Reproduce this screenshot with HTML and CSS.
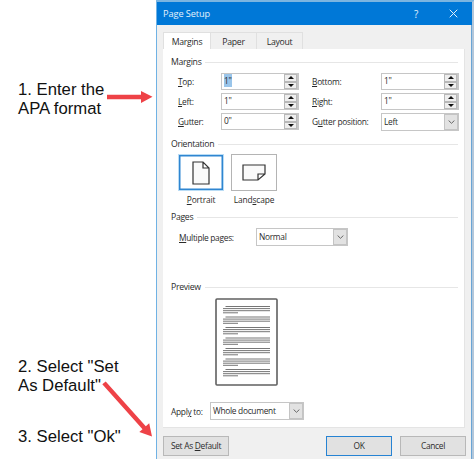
FILE: index.html
```html
<!DOCTYPE html>
<html lang="en">
<head>
<meta charset="utf-8">
<title>Page Setup</title>
<link rel="stylesheet" href="styles.css">
</head>
<body>
<aside class="notes">
  <p class="note note-1">1. Enter the<br>APA format</p>
  <p class="note note-2">2. Select "Set<br>As Default"</p>
  <p class="note note-3">3. Select "Ok"</p>
</aside>
<main class="dialog">
  <header class="titlebar">
    <span class="title">Page Setup</span>
    <span class="help">?</span>
    <svg class="close" viewBox="0 0 9 9"><path d="M.7.7 8.3 8.3M8.3.7.7 8.3"/></svg>
  </header>
  <div class="body">
    <nav class="tabs"><span class="tab active">Margins</span><span class="tab">Paper</span><span class="tab">Layout</span></nav>
    <div class="panel">
      <section class="margins">
        <h2><span>Margins</span></h2>
        <div class="fields">
          <label><u>T</u>op:</label><div class="spin"><span><mark>1"</mark></span><i></i><i class="down"></i></div>
          <label><u>B</u>ottom:</label><div class="spin"><span>1"</span><i></i><i class="down"></i></div>
          <label><u>L</u>eft:</label><div class="spin"><span>1"</span><i></i><i class="down"></i></div>
          <label><u>R</u>ight:</label><div class="spin"><span>1"</span><i></i><i class="down"></i></div>
          <label><u>G</u>utter:</label><div class="spin"><span>0"</span><i></i><i class="down"></i></div>
          <label>G<u>u</u>tter position:</label><div class="select"><span>Left</span><b><svg viewBox="0 0 7 4"><path d="M.6.5 3.5 3.3 6.4.5"/></svg></b></div>
        </div>
      </section>
      <section class="orientation">
        <h2><span>Orientation</span></h2>
        <div class="choices">
          <div class="choice chosen"><div class="tile"><svg width="18" height="24" viewBox="0 0 18 24"><path d="M1 1h10l6 6v16H1zM11 1v6h6"/></svg></div><span><u>P</u>ortrait</span></div>
          <div class="choice"><div class="tile"><svg width="24" height="18" viewBox="0 0 24 18"><path d="M1 1h22v9l-7 6H1zM23 10h-7v6"/></svg></div><span>Land<u>s</u>cape</span></div>
        </div>
      </section>
      <section class="pages">
        <h2><span>Pages</span></h2>
        <div class="row"><label><u>M</u>ultiple pages:</label><div class="select"><span>Normal</span><b><svg viewBox="0 0 7 4"><path d="M.6.5 3.5 3.3 6.4.5"/></svg></b></div></div>
      </section>
      <section class="preview">
        <h2><span>Preview</span></h2>
        <svg class="sheet" width="63" height="88" viewBox="0 0 63 88">
          <defs>
            <path id="para" d="M10.500 .5H55M8 2.600H55M8 4.700H55M8 6.800H23"/>
          </defs>
          <rect x="1" y="1" width="61" height="86" rx="1"/>
          <use href="#para" y="8"/><use href="#para" y="18.500"/><use href="#para" y="29"/><use href="#para" y="39.500"/><use href="#para" y="50"/><use href="#para" y="60.500"/><use href="#para" y="71"/>
        </svg>
        <div class="row"><label>Appl<u>y</u> to:</label><div class="select"><span>Whole document</span><b><svg viewBox="0 0 7 4"><path d="M.6.5 3.5 3.3 6.4.5"/></svg></b></div></div>
      </section>
    </div>
    <footer><span class="button">Set As <u>D</u>efault</span><span class="button ok">OK</span><span class="button">Cancel</span></footer>
  </div>
</main>
<svg class="arrows" width="474" height="459" viewBox="0 0 474 459">
  <path d="M107 94.800H141V91L152.500 96.700 141 103V99.200H107zM105.700 381.400 145.800 426.200 149.200 423.300 152 436.500 139.300 432 142.500 429.200 102.300 384.300z"/>
</svg>
</body>
</html>
```
FILE: styles.css
```css
* { box-sizing: border-box; }
body {
  margin: 0;
  width: 474px;
  height: 459px;
  overflow: hidden;
  display: flex;
  background: #fff;
  color: #2b2b2b;
  font: 8.400px/12px "Open Sans", "Noto Sans", sans-serif;
  letter-spacing: -.3px;
}
p, h2 { margin: 0; font: inherit; }
u { text-underline-offset: 1px; text-decoration-thickness: 1px; }

.notes {
  width: 156px;
  flex: none;
  padding: 80px 0 0 18px;
  color: #111;
  font: 16.700px/19px "Liberation Sans", Arial, sans-serif;
  letter-spacing: 0;
  white-space: nowrap;
}
.note-2 { margin-top: 239px; }
.note-3 { margin-top: 32px; }

.dialog {
  flex: 1;
  display: flex;
  flex-direction: column;
  border-top: 2px solid #7cb5e0;
  border-left: 1px solid #70b2e4;
  border-right: 3px solid #b3c7da;
}
.titlebar {
  height: 23px;
  flex: none;
  display: flex;
  align-items: center;
  padding: 0 14px 0 6px;
  background: #0078d7;
  color: #e4f1fb;
  font-size: 9.200px;
  letter-spacing: -.08px;
}
.title { flex: 1; }
.help { width: 35px; font-size: 10px; }
.close { width: 9px; height: 9px; fill: none; stroke: #e4f1fb; stroke-width: 1; }

.body {
  flex: 1;
  padding: 7px 5px 0 6px;
  background: #f0f0f0;
  border-right: 1px solid #6aa5d6;
}
.tabs { display: flex; height: 17px; }
.tab {
  width: 46px;
  padding-top: 3px;
  text-align: center;
  border: 1px solid #e0e0e0;
  border-width: 1px 1px 0 0;
  font-size: 8.700px;
}
.tab.active { width: 48px; background: #fff; border-left-width: 1px; }
.panel {
  width: 302px;
  height: 379px;
  padding: 7px 6px 0 8px;
  background: #fff;
  border-right: 1px solid #e4e4e4;
  border-bottom: 1px solid #e4e4e4;
}
h2 { display: flex; align-items: center; gap: 4px; height: 12px; font-size: 8.700px; }
h2::after { content: ""; flex: 1; height: 1px; background: #e6e6e6; }

.margins { height: 82px; }
.fields {
  display: grid;
  grid-template-columns: 43px 78px 82px 78px;
  grid-auto-rows: 18px;
  row-gap: 2px;
  padding: 5px 0 0 7px;
}
.fields label { padding-top: 3px; white-space: nowrap; }
.fields label:nth-of-type(even) { padding-left: 13px; }
.spin {
  display: grid;
  grid-template-columns: 1fr 13px;
  grid-template-rows: 7.500px 7.500px;
  height: 17px;
  border: 1px solid #c6c6c6;
  border-right-width: 2px;
}
.spin span { grid-row: 1 / 3; padding: 1px 0 0 2px; }
.spin mark { background: #9ac5ea; color: inherit; padding: 1px 0; }
.spin i { position: relative; grid-column: 2; background: #eee; border: 1px solid #b8b8b8; }
.spin i::after {
  content: "";
  position: absolute;
  left: 3px;
  top: 1px;
  border: 3px solid transparent;
  border-top: 0;
  border-bottom: 3px solid #111;
}
.spin i.down::after { border-bottom: 0; border-top: 3px solid #111; }
.select { display: flex; height: 18px; border: 1px solid #c6c6c6; white-space: nowrap; }
.select span { flex: 1; padding: 2px 0 0 2px; }
.select b { width: 14px; display: flex; align-items: center; justify-content: center; background: #e2e2e2; border: 1px solid #c4c4c4; }
.select svg { width: 7px; height: 4px; fill: none; stroke: #666; stroke-width: 1; }

.orientation { height: 73px; }
.choices { display: flex; gap: 7px; padding: 4px 0 0 7px; }
.choice { width: 46px; text-align: center; white-space: nowrap; letter-spacing: -.15px; }
.tile { height: 37px; margin-bottom: 3px; display: flex; align-items: center; justify-content: center; border: 1px solid #b4b4b4; }
.tile svg { fill: #fafafa; stroke: #333; stroke-width: 1.200; }
.chosen .tile { border: 1px solid #b9dcf5; box-shadow: inset 0 0 0 1.500px #2f86d1; }
.row { display: flex; }
.row label { padding-top: 4px; }
.pages { height: 70px; }
.pages .row { padding: 5px 0 0 8px; }
.pages label { width: 77px; }
.pages .select { width: 92px; }
.sheet { display: block; margin: 5px 0 16px 44px; fill: #fff; stroke: #606060; stroke-width: 1.600; }
.sheet use { stroke-width: .9; stroke: #666; }
.preview label { width: 39px; }
.preview .select { width: 94px; }

footer { display: flex; width: 303px; padding-top: 8px; }
.button {
  width: 66px;
  height: 20px;
  margin-right: 8px;
  padding-top: 3px;
  text-align: center;
  background: #e1e1e1;
  border: 1px solid #b8b8b8;
  white-space: nowrap;
}
.button:last-child { margin: 0; }
.ok { margin-left: auto; border: 1.500px solid #2683d3; }
.arrows { position: absolute; left: 0; top: 0; fill: #ee4247; pointer-events: none; }
```
